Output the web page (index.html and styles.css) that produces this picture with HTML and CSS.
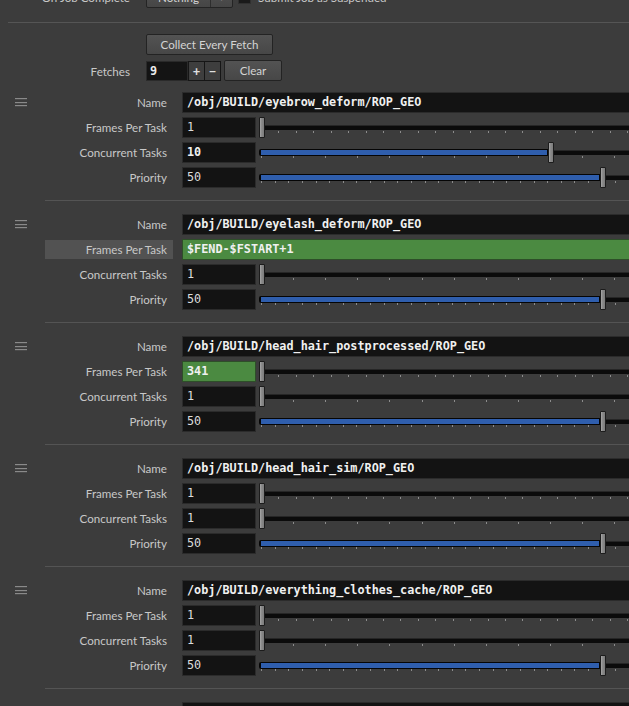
FILE: index.html
```html
<!DOCTYPE html>
<html lang="en">
<head>
    <meta charset="UTF-8">
    <meta name="viewport" content="width=device-width, initial-scale=1.0">
    <title>Fetch Jobs</title>
    <link rel="stylesheet" href="styles.css">
</head>
<body>
    <div class="panel">
        <div class="top-row">
            <span class="top-label">On Job Complete</span>
            <div class="dropdown">
                <span class="dd-text">Nothing</span>
                <span class="dd-arrow">&#9662;</span>
            </div>
            <span class="checkbox"></span>
            <span class="check-label">Submit Job as Suspended</span>
        </div>
        <div class="rule"></div>
        <div class="collect-row">
            <button class="btn collect">Collect Every Fetch</button>
        </div>
        <div class="fetch-row">
            <span class="top-label">Fetches</span>
            <span class="count">9</span>
            <button class="step">+</button>
            <button class="step">&minus;</button>
            <button class="btn clear">Clear</button>
        </div>

        <div class="blocks">
            <div class="block">
                <div class="grip"><span></span><span></span><span></span></div>
                <div class="fields">
                    <div class="row"><label>Name</label><div class="field wide bold">/obj/BUILD/eyebrow_deform/ROP_GEO</div></div>
                    <div class="row"><label>Frames Per Task</label><div class="field">1</div>
                        <div class="slider frames"><div class="track"></div><div class="ticks"></div><div class="handle" style="left: -1px"></div></div></div>
                    <div class="row"><label>Concurrent Tasks</label><div class="field bold">10</div>
                        <div class="slider tasks"><div class="track"></div><div class="fill" style="width: 289px"></div><div class="ticks"></div><div class="handle" style="left: 288px"></div></div></div>
                    <div class="row"><label>Priority</label><div class="field">50</div>
                        <div class="slider priority"><div class="track"></div><div class="fill" style="width: 341px"></div><div class="ticks"></div><div class="handle" style="left: 340px"></div></div></div>
                </div>
            </div>

            <div class="block">
                <div class="grip"><span></span><span></span><span></span></div>
                <div class="fields">
                    <div class="row"><label>Name</label><div class="field wide bold">/obj/BUILD/eyelash_deform/ROP_GEO</div></div>
                    <div class="row"><label class="active">Frames Per Task</label><div class="field wide bold expr">$FEND-$FSTART+1</div></div>
                    <div class="row"><label>Concurrent Tasks</label><div class="field">1</div>
                        <div class="slider tasks"><div class="track"></div><div class="ticks"></div><div class="handle" style="left: -1px"></div></div></div>
                    <div class="row"><label>Priority</label><div class="field">50</div>
                        <div class="slider priority"><div class="track"></div><div class="fill" style="width: 341px"></div><div class="ticks"></div><div class="handle" style="left: 340px"></div></div></div>
                </div>
            </div>

            <div class="block">
                <div class="grip"><span></span><span></span><span></span></div>
                <div class="fields">
                    <div class="row"><label>Name</label><div class="field wide bold">/obj/BUILD/head_hair_postprocessed/ROP_GEO</div></div>
                    <div class="row"><label>Frames Per Task</label><div class="field bold expr">341</div>
                        <div class="slider frames"><div class="track"></div><div class="ticks"></div><div class="handle" style="left: -1px"></div></div></div>
                    <div class="row"><label>Concurrent Tasks</label><div class="field">1</div>
                        <div class="slider tasks"><div class="track"></div><div class="ticks"></div><div class="handle" style="left: -1px"></div></div></div>
                    <div class="row"><label>Priority</label><div class="field">50</div>
                        <div class="slider priority"><div class="track"></div><div class="fill" style="width: 341px"></div><div class="ticks"></div><div class="handle" style="left: 340px"></div></div></div>
                </div>
            </div>

            <div class="block">
                <div class="grip"><span></span><span></span><span></span></div>
                <div class="fields">
                    <div class="row"><label>Name</label><div class="field wide bold">/obj/BUILD/head_hair_sim/ROP_GEO</div></div>
                    <div class="row"><label>Frames Per Task</label><div class="field">1</div>
                        <div class="slider frames"><div class="track"></div><div class="ticks"></div><div class="handle" style="left: -1px"></div></div></div>
                    <div class="row"><label>Concurrent Tasks</label><div class="field">1</div>
                        <div class="slider tasks"><div class="track"></div><div class="ticks"></div><div class="handle" style="left: -1px"></div></div></div>
                    <div class="row"><label>Priority</label><div class="field">50</div>
                        <div class="slider priority"><div class="track"></div><div class="fill" style="width: 341px"></div><div class="ticks"></div><div class="handle" style="left: 340px"></div></div></div>
                </div>
            </div>

            <div class="block">
                <div class="grip"><span></span><span></span><span></span></div>
                <div class="fields">
                    <div class="row"><label>Name</label><div class="field wide bold">/obj/BUILD/everything_clothes_cache/ROP_GEO</div></div>
                    <div class="row"><label>Frames Per Task</label><div class="field">1</div>
                        <div class="slider frames"><div class="track"></div><div class="ticks"></div><div class="handle" style="left: -1px"></div></div></div>
                    <div class="row"><label>Concurrent Tasks</label><div class="field">1</div>
                        <div class="slider tasks"><div class="track"></div><div class="ticks"></div><div class="handle" style="left: -1px"></div></div></div>
                    <div class="row"><label>Priority</label><div class="field">50</div>
                        <div class="slider priority"><div class="track"></div><div class="fill" style="width: 341px"></div><div class="ticks"></div><div class="handle" style="left: 340px"></div></div></div>
                </div>
            </div>

            <div class="block">
                <div class="grip"><span></span><span></span><span></span></div>
                <div class="fields">
                    <div class="row"><label>Name</label><div class="field wide bold">/obj/BUILD/shoes_cache/ROP_GEO</div></div>
                </div>
            </div>
        </div>
    </div>
</body>
</html>
```

FILE: styles.css
```css
* {
    margin: 0;
    padding: 0;
    box-sizing: border-box;
}

body {
    background-color: #3c3c3c;
    color: #c8c8c8;
    font-family: Lato, "Liberation Sans", sans-serif;
    font-size: 11.6px;
    overflow: hidden;
}

.panel {
    width: 760px;
    padding-left: 8px;
}

/* top parameters */

.top-row {
    display: flex;
    align-items: center;
    height: 21px;
    margin-top: -13px;
}

.top-label {
    width: 122px;
    margin-right: 16px;
    text-align: right;
}

.dropdown {
    display: flex;
    width: 87px;
    height: 21px;
    border: 1px solid #242424;
    border-radius: 2px;
    background: linear-gradient(#525252, #464646);
    color: #d2d2d2;
}

.dd-text {
    flex: 1;
    text-align: center;
    line-height: 19px;
    border-right: 1px solid #2e2e2e;
}

.dd-arrow {
    width: 21px;
    text-align: center;
    line-height: 19px;
    font-size: 10px;
    color: #9a9a9a;
}

.checkbox {
    width: 13px;
    height: 13px;
    margin: 0 7px 0 5px;
    background-color: #1a1a1a;
    border: 1px solid #303030;
}

.rule {
    height: 1px;
    margin-top: 14px;
    background-color: #555555;
}

.collect-row {
    padding: 11px 0 0 138px;
}

.btn {
    height: 21px;
    border: 1px solid #232323;
    border-radius: 2px;
    background: linear-gradient(#535353, #474747);
    color: #d4d4d4;
    font-family: inherit;
    font-size: 11.6px;
}

.collect {
    width: 127px;
}

.fetch-row {
    display: flex;
    align-items: center;
    height: 22px;
    margin-top: 5px;
}

.count {
    width: 42px;
    height: 20px;
    padding-left: 3px;
    background-color: #141414;
    border: 1px solid #2a2a2a;
    color: #ececec;
    font-family: "DejaVu Sans Mono", monospace;
    font-weight: bold;
    font-size: 11.8px;
    line-height: 18px;
}

.step {
    width: 17px;
    height: 20px;
    background-color: #3e3e3e;
    border: 1px solid #161616;
    color: #e0e0e0;
    font-family: inherit;
    font-weight: bold;
    font-size: 13px;
    line-height: 16px;
}

.step + .step {
    margin-left: -1px;
}

.clear {
    width: 58px;
    height: 21px;
    margin: -2px 0 0 3px;
}

/* fetch blocks */

.blocks {
    margin-top: -3px;
}

.block {
    display: flex;
}

.grip {
    width: 37px;
    padding: 19px 0 0 7px;
}

.grip span {
    display: block;
    width: 12px;
    height: 2px;
    margin-bottom: 1.7px;
    border-top: 1px solid #8a8a8a;
    border-bottom: 1px solid #4a4a4a;
}

.fields {
    flex: 1;
    display: flex;
    flex-direction: column;
    gap: 4px;
    padding: 13px 0 12px;
    border-bottom: 1px solid #545454;
}

.row {
    display: flex;
    height: 21px;
}

.row label {
    width: 128px;
    margin: 1px 9px 1px 0;
    padding-right: 6px;
    text-align: right;
    line-height: 19px;
}

.row label.active {
    background-color: #525252;
}

.field {
    width: 74px;
    height: 21px;
    padding-left: 4px;
    background-color: #131313;
    border: 1px solid #2b2b2b;
    color: #dcdcdc;
    font-family: "DejaVu Sans Mono", monospace;
    font-size: 11.8px;
    line-height: 19px;
    white-space: nowrap;
}

.field.wide {
    flex: 1;
}

.field.bold {
    font-weight: bold;
    color: #f0f0f0;
}

.field.expr {
    background-color: #4b8a41;
    border-color: #2e4f29;
}

/* sliders */

.slider {
    position: relative;
    flex: 1;
    margin-left: 4px;
}

.track {
    position: absolute;
    left: 1px;
    right: 0;
    top: 8px;
    height: 5px;
    background-color: #0b0b0b;
    border-top: 1px solid #262626;
}

.fill {
    position: absolute;
    left: -1px;
    top: 7px;
    height: 7px;
    background-color: #2f5ead;
    border: 1px solid #050505;
    border-left-width: 2px;
    border-radius: 2px 0 0 2px;
}

.ticks {
    position: absolute;
    left: 1px;
    right: 0;
    top: 14px;
    height: 2px;
}

.frames .ticks {
    background: repeating-linear-gradient(to right, #8c8c8c 0 1px, transparent 1px 17.43px);
}

.tasks .ticks {
    background: repeating-linear-gradient(to right, #8c8c8c 0 1px, transparent 1px 32.12px);
}

.priority .ticks {
    background: repeating-linear-gradient(to right, #8c8c8c 0 1px, transparent 1px 13.63px);
}

.handle {
    position: absolute;
    top: 0;
    width: 6px;
    height: 21px;
    background: linear-gradient(to right, #a8a8a8, #8a8a8a 40%, #7c7c7c);
    border: 1px solid #1c1c1c;
    border-radius: 1px;
}
```
